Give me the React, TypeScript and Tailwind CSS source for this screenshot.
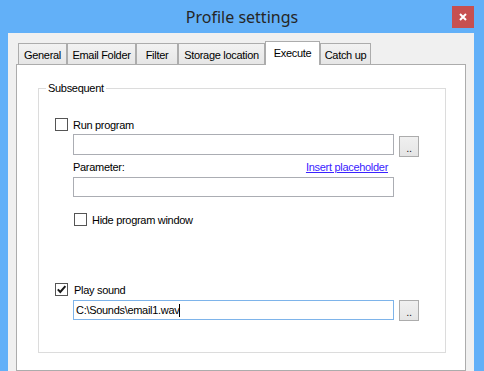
import React from "react";

const ui = { fontFamily: '"Liberation Sans", Arial, sans-serif' };

function CheckBox({ checked }: { checked?: boolean }) {
  return (
    <span className="w-[13px] h-[13px] border border-[#555] bg-white flex items-center justify-center shrink-0">
      {checked && (
        <svg width="11" height="11" viewBox="0 0 11 11">
          <path d="M1.8 5.4 L4.3 8 L9.4 2.2" fill="none" stroke="#1a1a1a" strokeWidth="2" />
        </svg>
      )}
    </span>
  );
}

function BrowseButton({ className = "" }: { className?: string }) {
  return (
    <button className={"w-[20px] h-[21px] border border-[#acacac] bg-gradient-to-b from-[#f0f0f0] to-[#e5e5e5] flex items-end justify-center pb-[4px] text-[11px] leading-[8px] text-[#222] " + className}>
      ..
    </button>
  );
}

const tabs = [
  { label: "General", w: "w-[49px]" },
  { label: "Email Folder", w: "w-[69px]" },
  { label: "Filter", w: "w-[42px]" },
  { label: "Storage location", w: "w-[87px]" },
  { label: "Execute", w: "w-[55px]", active: true },
  { label: "Catch up", w: "w-[51px]" },
];

export default function App() {
  return (
    <div className="w-[484px] h-[371px] bg-[#62b0f8] flex flex-col overflow-hidden" style={ui}>
      {/* title bar */}
      <div className="h-[33px] relative flex items-center justify-center shrink-0">
        <span className="text-[16px] text-[#262626]" style={{ fontFamily: '"Noto Sans", "Open Sans", sans-serif' }}>
          Profile settings
        </span>
        <div className="absolute right-[10px] top-[6px] w-[22px] h-[22px] bg-[#c75050] flex items-center justify-center">
          <svg width="8" height="8" viewBox="0 0 8 8">
            <path d="M1 1 L7 7 M7 1 L1 7" stroke="#fff" strokeWidth="2" />
          </svg>
        </div>
      </div>

      {/* client area */}
      <div className="ml-[8px] w-[466px] flex-1 bg-[#f0f0f0] pt-[8px] px-[8px] flex flex-col">
        <div className="flex items-end h-[23px] pl-[2px]">
          {tabs.map((t) =>
            t.active ? (
              <div
                key={t.label}
                className={t.w + " h-[24px] -mb-[1px] relative z-10 bg-white border border-b-0 border-[#acacac] flex items-start justify-center pt-[5px] text-[11px] leading-[13px] tracking-[-0.3px] text-black"}
              >
                {t.label}
              </div>
            ) : (
              <div
                key={t.label}
                className={t.w + " h-[21px] bg-gradient-to-b from-[#f2f2f2] to-[#e6e6e6] border border-b-0 border-[#acacac] flex items-center justify-center pt-[2px] text-[11px] leading-[13px] tracking-[-0.3px] text-black"}
              >
                {t.label}
              </div>
            )
          )}
        </div>

        {/* tab panel */}
        <div className="flex-1 bg-white border border-[#acacac] pt-[23px] pl-[21px] pr-[19px]">
          <div className="relative h-[265px] border border-[#dcdcdc] pt-[29px] pl-[16px] text-[11px] leading-[13px] tracking-[-0.3px] text-black">
            <span className="absolute left-[7px] -top-[7px] bg-white px-[2px]">Subsequent</span>

            <div className="flex items-center h-[13px]">
              <CheckBox />
              <span className="ml-[5px] pt-[1px]">Run program</span>
            </div>
            <div className="flex items-start ml-[18px] mt-[3px]">
              <div className="w-[321px] h-[21px] border border-[#abadb3] bg-white" />
              <BrowseButton className="ml-[5px] mt-[2px]" />
            </div>
            <div className="w-[321px] ml-[18px] mt-[3px] h-[14px] flex items-center justify-between pr-[6px]">
              <span>Parameter:</span>
              <span className="text-[#3a22ff] underline underline-offset-[1px]">Insert placeholder</span>
            </div>
            <div className="w-[321px] h-[20px] ml-[18px] mt-[3px] border border-[#abadb3] bg-white" />

            <div className="flex items-center h-[13px] ml-[19px] mt-[16px]">
              <CheckBox />
              <span className="ml-[5px] pt-[1px]">Hide program window</span>
            </div>

            <div className="flex items-center h-[13px] mt-[57px]">
              <CheckBox checked />
              <span className="ml-[6px] pt-[1px]">Play sound</span>
            </div>
            <div className="flex items-start ml-[18px] mt-[4px]">
              <div className="w-[321px] h-[20px] border border-[#7eb4ea] bg-white flex items-center pl-[2px]">
                <span>C:\Sounds\email1.wav</span>
                <span className="w-[1px] h-[13px] bg-black" />
              </div>
              <BrowseButton className="ml-[5px]" />
            </div>
          </div>
        </div>
      </div>
    </div>
  );
}
